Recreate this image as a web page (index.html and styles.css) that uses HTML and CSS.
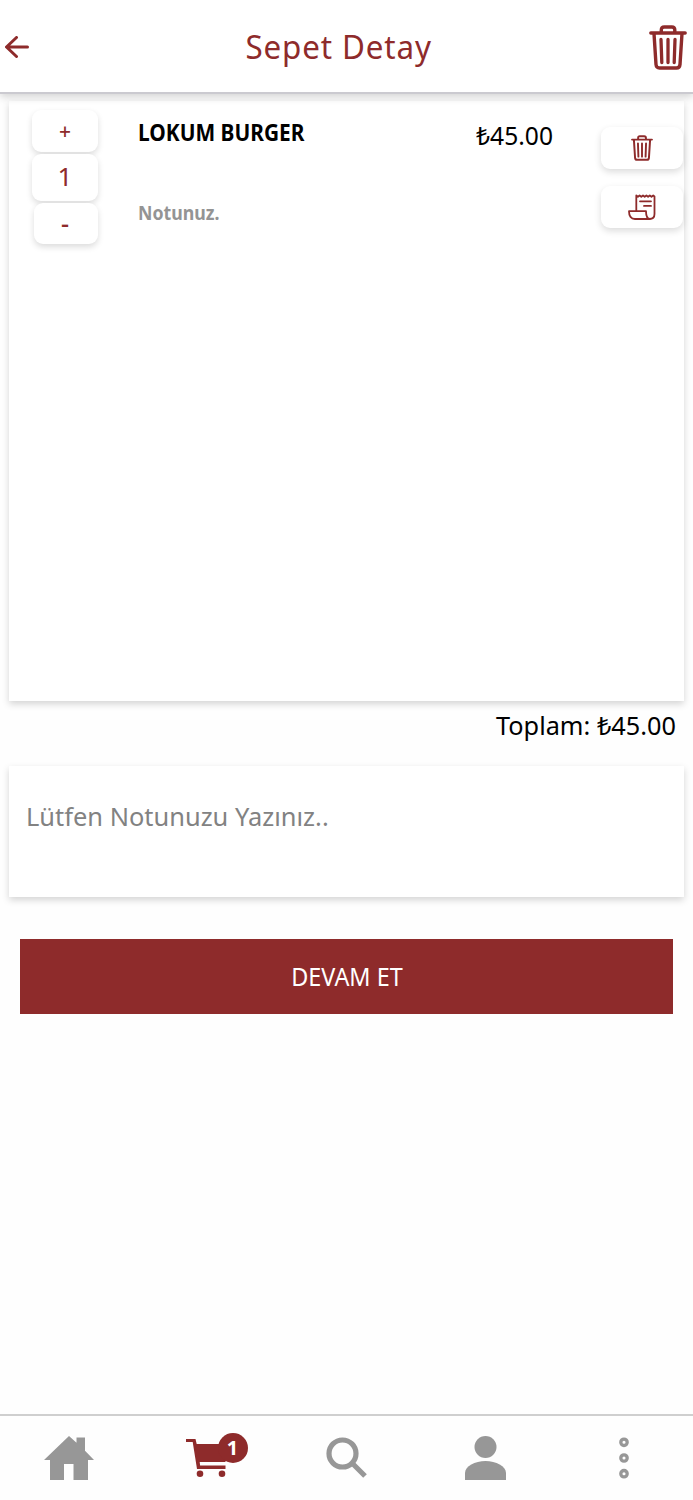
FILE: index.html
```
<!DOCTYPE html>
<html lang="tr">
<head>
<meta charset="utf-8">
<title>Sepet Detay</title>
<link rel="stylesheet" href="styles.css">
</head>
<body>
<svg class="defs" width="0" height="0" aria-hidden="true">
  <symbol id="trash" viewBox="0 0 38 45">
    <g fill="none" stroke="currentColor" stroke-linecap="round" stroke-linejoin="round">
      <path stroke-width="3.400" d="M1.800 8H36.200M12.300 7.500V5q0-3 3-3h7.500q3 0 3 3v2.500M5 8.500l2 31q.3 3.500 3.500 3.500h17q3.200 0 3.500-3.500L33 8.500"/>
      <path stroke-width="3.300" d="M12 14.500l.8 23M19 14.500v23M26 14.500l-.8 23"/>
    </g>
  </symbol>
</svg>
<div class="app">
  <header class="header">
    <svg class="back" viewBox="0 0 24 22"><path d="M11.500 1.500L1.500 11l10 9.500M2 11h20.500"/></svg>
    <h1 class="title">Sepet Detay</h1>
    <svg class="clear"><use href="#trash"/></svg>
  </header>

  <main class="main">
    <section class="cart">
      <div class="stepper">
        <button class="step plus">+</button>
        <span class="step count">1</span>
        <button class="step minus">-</button>
      </div>
      <div class="info">
        <h2 class="name">LOKUM BURGER</h2>
        <p class="item-note">Notunuz.</p>
      </div>
      <div class="price-cell"><span class="price">₺45.00</span></div>
      <div class="actions">
        <button class="action"><svg class="mini-trash"><use href="#trash"/></svg></button>
        <button class="action"><svg class="receipt" viewBox="0 0 28 26"><path d="M8.300 16.500V1.500l1.600 1.300 1.700-1.300 1.700 1.300L15 1.500l1.700 1.300 1.700-1.300 1.700 1.300 1.700-1.300 1.700 1.300 1.700-1.300 1.300 1V20q0 5-5 5H7q-6 0-6-7.800h17q0 7.800 4.200 7.800M12 7.300h11M16 11.900h7"/></svg></button>
      </div>
    </section>
    <p class="total"><span class="total-text">Toplam: ₺45.00</span></p>
    <section class="note"><span class="note-text">Lütfen Notunuzu Yazınız..</span></section>
    <button class="continue"><span class="continue-text">DEVAM ET</span></button>
  </main>

  <nav class="tabs">
    <a class="tab"><svg class="home" viewBox="0 0 50 44"><path d="M25 0l7.500 6.800V1.500H41v13.300l9 9.200h-6v20H29.500V28H20v16H6V24H0z"/></svg></a>
    <a class="tab active">
      <svg class="basket" viewBox="0 0 44 40"><path d="M0 0h9.500l1.200 5H44v17H39.500v1H13.700l.4 3.500H39.500V30H11L6.700 3H0z"/><circle cx="14" cy="34.700" r="3.300"/><circle cx="36" cy="34.700" r="3.300"/></svg>
      <span class="badge">1</span>
    </a>
    <a class="tab"><svg class="search" viewBox="0 0 42 42"><circle cx="16.500" cy="16.500" r="13.500"/><path d="M26.500 26.500L39 39"/></svg></a>
    <a class="tab"><svg class="user" viewBox="0 0 41 44"><circle cx="20.500" cy="11" r="11"/><path d="M0 44v-7C0 30 10 25 20.500 25S41 30 41 37v7z"/></svg></a>
    <a class="tab"><svg class="more" viewBox="0 0 10 42"><circle cx="5" cy="5.300" r="3.200"/><circle cx="5" cy="21" r="3.200"/><circle cx="5" cy="36.700" r="3.200"/></svg></a>
  </nav>
</div>
</body>
</html>
```
FILE: styles.css
```
* { box-sizing: border-box; }
body {
  margin: 0;
  background: #fefefe;
  color: #000;
  font-family: "Noto Sans", "Open Sans", sans-serif;
}
h1, h2, p { margin: 0; }
button { border: 0; padding: 0; font: inherit; color: inherit; }
svg { display: block; }
.defs { position: absolute; }
.app { display: flex; flex-direction: column; height: 1500px; }

.header {
  position: relative;
  display: flex;
  align-items: center;
  justify-content: space-between;
  height: 94px;
  padding: 0 6px 0 5px;
  border-bottom: 2px solid #cbcad0;
  background: #fff;
  box-shadow: 0 3px 8px rgba(0, 0, 0, .17);
  color: #8e2b2b;
}
.back { width: 24px; height: 22px; margin-top: 2px; fill: none; stroke: currentColor; stroke-width: 3; stroke-linecap: round; stroke-linejoin: round; }
.title { padding: 2px 0 0 0; margin-right: 1px; font-size: 32.500px; font-weight: 400; line-height: 44px; letter-spacing: .9px; white-space: nowrap; transform: scaleX(.965); }
.clear { width: 38px; height: 45px; margin-top: 2px; }

.main { display: flex; flex-direction: column; padding: 7px 9px 0; }
.cart {
  display: grid;
  grid-template-columns: 106px 338px 125px 82px;
  height: 600px;
  padding: 9px 0 0 23px;
  background: #fff;
  box-shadow: 0 3px 7px rgba(0, 0, 0, .17);
}
.stepper { display: flex; flex-direction: column; width: 66px; gap: 2px; color: #8e2b2b; }
.step {
  display: flex;
  align-items: center;
  justify-content: center;
  height: 42px;
  border-radius: 9px;
  background: #fff;
  box-shadow: 0 3px 6px rgba(0, 0, 0, .14);
  font-size: 21px;
  font-weight: 500;
}
.count { height: 47px; padding-bottom: 3px; font-size: 26px; font-weight: 400; }
.minus { width: 64px; margin-left: 2px; height: 41px; font-size: 25px; padding: 0 2px 2px 0; }
.name { padding-top: 6px; font-size: 23px; font-weight: 700; line-height: 32px; white-space: nowrap; transform: scaleX(.908); transform-origin: left; }
.item-note { margin-top: 50px; color: #949494; font-size: 19.500px; font-weight: 700; line-height: 30px; transform: scaleX(.91); transform-origin: left; }
.price { display: block; padding-top: 7px; font-size: 25.500px; line-height: 36px; white-space: nowrap; transform: scaleX(.965); transform-origin: left; }
.actions { display: flex; flex-direction: column; gap: 17px; padding-top: 17px; }
.action {
  display: flex;
  align-items: center;
  justify-content: center;
  height: 42px;
  border-radius: 9px;
  background: #fff;
  box-shadow: 0 3px 7px rgba(0, 0, 0, .14);
  color: #8e2b2b;
}
.mini-trash { width: 22px; height: 26px; }
.receipt { width: 28px; height: 26px; fill: none; stroke: currentColor; stroke-width: 1.800; stroke-linecap: round; stroke-linejoin: round; }
.total { height: 65px; padding: 6px 8px 0 0; font-size: 26px; line-height: 36px; text-align: right; white-space: nowrap; }
.total-text, .note-text, .continue-text { display: inline-block; }
.total-text { transform: scaleX(.973); transform-origin: right; }
.note-text { transform: scaleX(.978); transform-origin: left; }
.note {
  height: 131px;
  padding: 32px 17px;
  background: #fff;
  box-shadow: 0 3px 7px rgba(0, 0, 0, .17);
  color: #828282;
  font-size: 26px;
  line-height: 36px;
  white-space: nowrap;
}
.continue { height: 75px; margin: 42px 11px 0 11px; padding-bottom: 1px; background: #8e2b2b; color: #fff; font-size: 26px; }
.continue-text { transform: scaleX(.9); }

.tabs {
  display: grid;
  grid-template-columns: repeat(5, 1fr);
  height: 86px;
  margin-top: auto;
  border-top: 2px solid #cfcfcf;
  background: #fefefe;
  color: #979797;
}
.tab { position: relative; display: flex; align-items: center; justify-content: center; }
.tab svg { fill: currentColor; }
.active { color: #8e2b2b; }
.home { width: 50px; height: 44px; }
.basket { width: 44px; height: 40px; margin-top: 2px; }
.badge {
  position: absolute;
  top: 17px;
  left: 79px;
  width: 30px;
  height: 30px;
  border-radius: 50%;
  background: #8e2b2b;
  color: #fff;
  font-size: 20px;
  font-weight: 700;
  line-height: 30px;
  text-align: center;
}
.search { width: 42px; height: 42px; margin-left: 1px; }
.tab .search { fill: none; stroke: currentColor; stroke-width: 5.200; }
.user { width: 41px; height: 44px; }
.more { width: 10px; height: 42px; }
.tab .more { fill: none; stroke: currentColor; stroke-width: 3.300; }
```
